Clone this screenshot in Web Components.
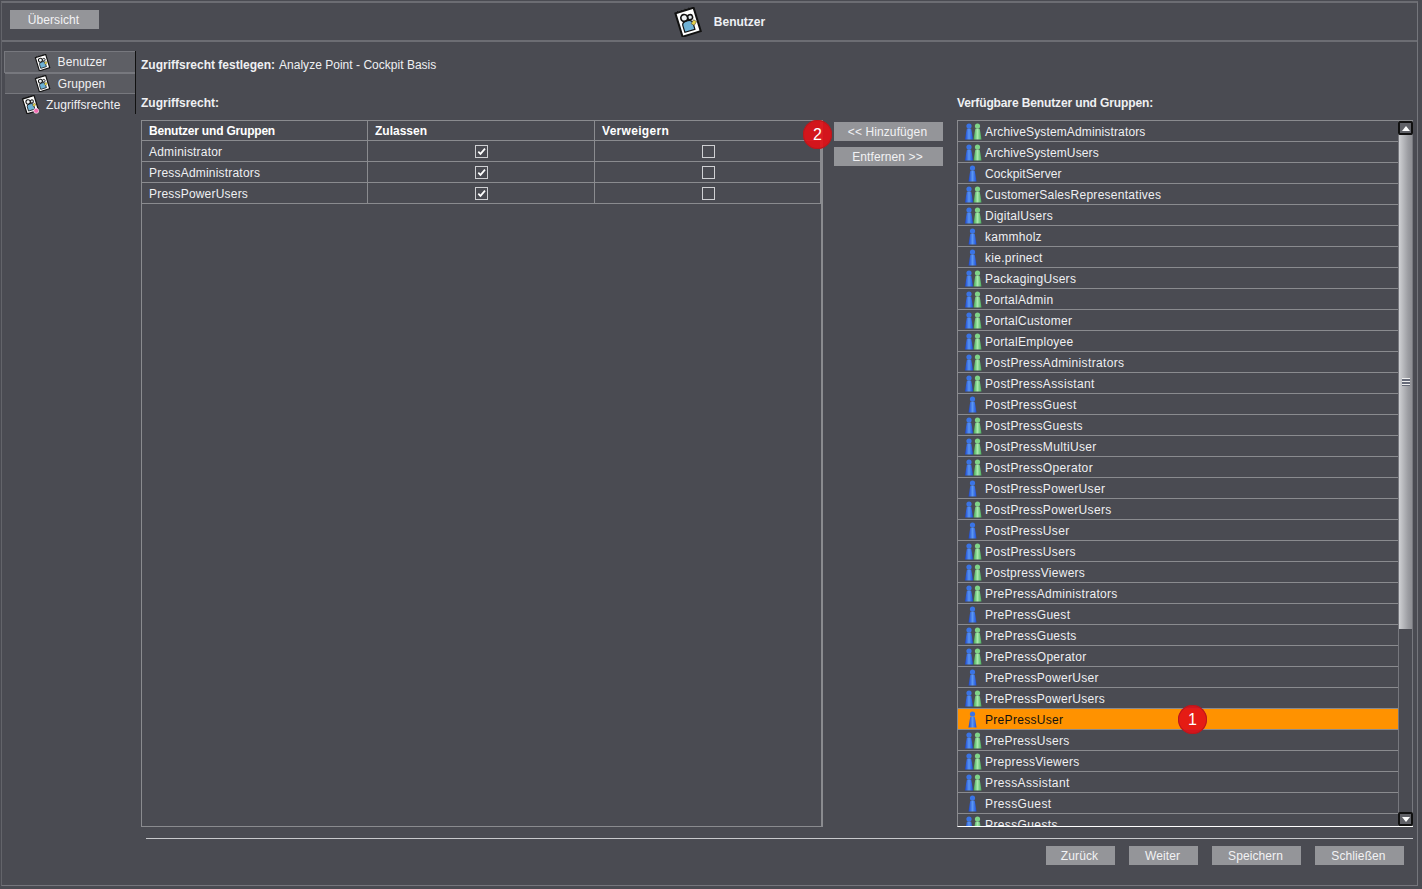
<!DOCTYPE html>
<html lang="de"><head><meta charset="utf-8"><title>Benutzer</title>
<style>
html,body{margin:0;padding:0;background:#4a4b52;}
body{font:12px "Liberation Sans",Arial,sans-serif;color:#f0f0f0;width:1422px;height:889px;overflow:hidden;}
</style></head><body>
<app-window>
  <app-header slot="header"></app-header>
  <side-nav slot="side">
    <side-tab label="Benutzer" icon="user" boxed></side-tab>
    <side-tab label="Gruppen" icon="group" shaded></side-tab>
    <side-tab label="Zugriffsrechte" icon="rights" wide></side-tab>
  </side-nav>
  <main-panel slot="main"></main-panel>
</app-window>
<script>
const mk=(name,css,html,init)=>{customElements.define(name,class extends HTMLElement{
  connectedCallback(){ if(this.shadowRoot) return; const r=this.attachShadow({mode:'open'});
    r.innerHTML='<style>'+css+'</style>'+(typeof html==='function'?html(this):html); if(init) init(this,r);} });};

const noteIcon=(size,badge,yellow)=>`<svg width="${size}" height="${size}" viewBox="0 0 30 30" style="display:block">
<g transform="rotate(-17 15 15)">
<rect x="5.5" y="3" width="19" height="24.5" fill="#fff" stroke="#111" stroke-width="2"/>
<path d="M8 1.5v2M12 1.5v2M16 1.5v2M20 1.5v2" stroke="#111" stroke-width=".9"/>
<circle cx="18.4" cy="11" r="2.5" fill="#dfe6ea" stroke="#111" stroke-width="1.5"/>
<path d="M9 24 V17 Q9 13.5 14 13.5 Q19 13.5 19.5 17 V24Z" fill="#6fb2d6" stroke="#111" stroke-width="1.2"/>
<circle cx="12.6" cy="10" r="3.4" fill="#eef2f4" stroke="#111" stroke-width="1.7"/>
<path d="M17.5 17.5l3.5-3 2.4 2.6-3.5 3z" fill="${yellow?'#f0dc3a':'#e6d24a'}" stroke="#333" stroke-width=".5"/>
</g>${badge?'<circle cx="24" cy="25" r="4" fill="#f06ab0" stroke="#fff" stroke-width="1"/>':''}</svg>`;

mk('app-window',`:host{display:grid;grid-template-columns:135px 1fr;grid-template-rows:39px 1fr;box-sizing:border-box;width:1417px;height:885px;margin:1px 0 0 1px;border:1px solid #75767c;border-top:2px solid #6c6d73;border-left:1px solid #63646a}
::slotted([slot=header]){grid-column:1/3}`,
`<slot name="header"></slot><slot name="side"></slot><slot name="main"></slot>`);

mk('app-header',`:host{display:grid;grid-template-columns:1fr auto 1fr;align-items:center;box-sizing:border-box;height:39px;border-bottom:2px solid #6c6d73;padding-left:8px}
.t{display:flex;align-items:center;gap:11px;font:bold 12px "Liberation Sans",Arial,sans-serif;color:#eef0f4;margin-left:11px}
.b{justify-self:start}`,
`<push-button class="b" w="89" style="margin-top:-5px">Übersicht</push-button>
<div class="t">${noteIcon(30)}<span>Benutzer</span></div><span></span>`);

mk('push-button',`:host{display:inline-flex;align-items:center;justify-content:center;box-sizing:border-box;height:19px;background:#949599;color:#f2f2f4;font:12px "Liberation Sans",Arial,sans-serif;letter-spacing:.1px;white-space:nowrap;padding:1px 2px 0 0}`,
`<slot></slot>`,(e)=>{e.style.width=(e.getAttribute('w')||89)+'px';});

mk('side-nav',`:host{display:flex;flex-direction:column;padding-top:9px;padding-left:0}`,`<slot></slot>`);

const icons={user:noteIcon(17),group:noteIcon(17,false,true),rights:noteIcon(19,true)};
mk('side-tab',`:host{display:block;box-sizing:border-box;height:21px;margin-left:2px;width:132px;border-right:1px solid #111;}
:host([boxed]){height:22px}
:host([wide]){height:20px}
.i{height:100%;box-sizing:border-box;display:flex;align-items:center;justify-content:center;gap:7px;color:#f0f0f2;font:12px "Liberation Sans",Arial,sans-serif;letter-spacing:.1px;padding-right:1px}
:host([boxed]) .i{background:#5e5f65;border:1px solid #77787e;border-right:0;padding-left:1px}
:host([shaded]) .i{background:#5a5b61;border-top:1px solid #77787e;border-bottom:1px solid #77787e;margin-left:1px}
:host([wide]) .i{gap:6px;justify-content:flex-start;padding-left:17px;padding-top:1px}`,
e=>`<div class="i">${icons[e.getAttribute('icon')]}<span>${e.getAttribute('label')}</span></div>`);

mk('person-icon',`:host{display:block;width:18px;height:17px;flex:none}svg{display:block}`,e=>{
 const fig=(x,a,c)=>`<g transform="translate(${x} 0)"><circle cx="4" cy="3" r="2.6" fill="${a}"/><path d="M1.8 5.8Q4 5 6.2 5.8L7 10L8 16.5H0L1 10Z" fill="url(#${c})"/></g>`;
 const defs=`<defs><linearGradient id="bl" x1="0" x2="1"><stop offset="0" stop-color="#1a45d0"/><stop offset=".5" stop-color="#5a96f2"/><stop offset="1" stop-color="#1c4cd8"/></linearGradient><linearGradient id="gr" x1="0" x2="1"><stop offset="0" stop-color="#3fa552"/><stop offset=".5" stop-color="#a8e8ac"/><stop offset="1" stop-color="#48ae5c"/></linearGradient></defs>`;
 return `<svg width="18" height="17" viewBox="0 0 18 17">${defs}${e.hasAttribute('group')?fig(8.5,'#7fd488',"gr")+fig(0,'#3a74e6',"bl"):fig(3.5,'#3a74e6',"bl")}</svg>`;});

mk('num-badge',`:host{position:absolute;display:flex;align-items:center;justify-content:center;width:29px;height:29px;border-radius:50%;background:rgba(226,16,22,.9);box-shadow:inset 0 0 0 1px #b8181c;color:#fff;font:16px "Liberation Sans",Arial,sans-serif;z-index:3}`,`<slot></slot>`);

mk('check-box',`:host{display:block;width:13px;height:13px;box-sizing:border-box;border:1px solid #cfd0d3;}svg{display:block}`,
e=>e.hasAttribute('on')?`<svg width="11" height="11" viewBox="0 0 11 11"><path d="M2.3 5.6l2.2 2.3L9 2.6" fill="none" stroke="#fff" stroke-width="1.7"/></svg>`:'');

mk('acl-table',`:host{display:block;box-sizing:border-box;width:682px;height:707px;border:1px solid #8a8b8f;border-right-width:2px;}
.r{display:grid;grid-template-columns:226px 227px 226px;box-sizing:border-box;height:21px;border-bottom:1px solid #8a8b8f;align-items:center;font:12px "Liberation Sans",Arial,sans-serif;letter-spacing:.2px;color:#eff0f2}
.r.h{height:20px;font-weight:bold;letter-spacing:0;color:#fff}
.r>div{height:100%;display:flex;align-items:center;box-sizing:border-box;padding-left:7px;border-right:1px solid #8a8b8f}
.r:not(.h)>div:first-child{padding-top:1px}
.c{justify-content:center;padding-left:0!important}
.c+.c{padding-left:2px!important}`,
()=>{const row=(n,a)=>`<div class="r"><div>${n}</div><div class="c"><check-box ${a?'on':''}></check-box></div><div class="c"><check-box></check-box></div></div>`;
return `<div class="r h"><div style="letter-spacing:-.2px">Benutzer und Gruppen</div><div>Zulassen</div><div style="letter-spacing:.3px">Verweigern</div></div>`+row('Administrator',1)+row('PressAdministrators',1)+row('PressPowerUsers',1);});

mk('user-row',`:host{display:flex;align-items:center;box-sizing:border-box;height:21px;flex:none;border-bottom:1px solid #8a8b8f;padding-left:7px;gap:2px;color:#eff0f2;font:12px "Liberation Sans",Arial,sans-serif;letter-spacing:.25px;white-space:nowrap}
span{padding-top:1px}
:host([sel]){background:#ff9200;color:#111}`,
e=>`<person-icon ${e.hasAttribute('group')?'group':''}></person-icon><span><slot></slot></span>`);

mk('scroll-bar',`:host{display:flex;flex-direction:column;width:15px;box-sizing:border-box;flex:none;background:#4a4b52;border-left:1px solid #77787e;border-right:1px solid #77787e}
.a{height:14px;flex:none;box-sizing:border-box;margin:0 -1px 0 -1px;border:2px solid #111;border-radius:2px;background:#606167;display:flex;align-items:center;justify-content:center}
.th{height:494px;flex:none;background:linear-gradient(90deg,#cfd0d3,#9c9da2 70%,#8e8f94);display:flex;align-items:center;justify-content:center}
.g{width:8px;height:8px;background:repeating-linear-gradient(#eee 0 1px,#666a78 1px 3px)}
.sp{flex:1}svg{display:block}`,
`<div class="a"><svg width="8" height="5"><path d="M4 0l4 5H0z" fill="#fff"/></svg></div><div class="th"><div class="g"></div></div><div class="sp"></div><div class="a"><svg width="8" height="5"><path d="M0 0h8L4 5z" fill="#fff"/></svg></div>`);

const users=[['ArchiveSystemAdministrators',1],['ArchiveSystemUsers',1],['CockpitServer',0],['CustomerSalesRepresentatives',1],['DigitalUsers',1],['kammholz',0],['kie.prinect',0],['PackagingUsers',1],['PortalAdmin',1],['PortalCustomer',1],['PortalEmployee',1],['PostPressAdministrators',1],['PostPressAssistant',1],['PostPressGuest',0],['PostPressGuests',1],['PostPressMultiUser',1],['PostPressOperator',1],['PostPressPowerUser',0],['PostPressPowerUsers',1],['PostPressUser',0],['PostPressUsers',1],['PostpressViewers',1],['PrePressAdministrators',1],['PrePressGuest',0],['PrePressGuests',1],['PrePressOperator',1],['PrePressPowerUser',0],['PrePressPowerUsers',1],['PrePressUser',0,1],['PrePressUsers',1],['PrepressViewers',1],['PressAssistant',1],['PressGuest',0],['PressGuests',1]];
const sp=n=>/^Archive/.test(n)?.14:/^Cockpit/.test(n)?.1:/^PostPress/.test(n)?.35:/^PrePress/.test(n)?.3:/^Press/.test(n)?.38:.27;

mk('user-list',`:host{display:flex;box-sizing:border-box;width:456px;height:707px;border-top:1px solid #8a8b8f;border-bottom:1px solid #fff;border-left:1px solid #8a8b8f;position:relative}
.l{flex:1;overflow:hidden;display:flex;flex-direction:column;position:relative}
num-badge{left:220px;top:584px}`,
`<div class="l">${users.map(u=>`<user-row ${u[1]?'group':''} ${u[2]?'sel':''} style="letter-spacing:${sp(u[0])}px">${u[0]}</user-row>`).join('')}<num-badge>1</num-badge></div><scroll-bar></scroll-bar>`);

mk('main-panel',`:host{display:flex;flex-direction:column;padding:0 0 0 4px;font:12px "Liberation Sans",Arial,sans-serif;color:#eff0f2;letter-spacing:.02px;min-width:0}
.top{height:48px;box-sizing:border-box;padding-top:16px;white-space:nowrap}
b{letter-spacing:0}.top b{margin-right:4px}
.cols{display:grid;grid-template-columns:682px 134px 456px;margin-top:0}
.lab{height:30px;font-weight:bold;letter-spacing:0;padding-top:6px;box-sizing:border-box}
.lab.v{letter-spacing:-.125px}
.mid{display:flex;flex-direction:column;gap:6px;padding:32px 0 0 11px;position:relative}
num-badge{left:-20px;top:30px}
.rule{height:1px;background:#c8c9cc;margin:11px 5px 0 5px;width:1267px}
.foot{display:flex;justify-content:flex-end;gap:14px;padding:7px 10px 0 0;width:1273px;box-sizing:border-box}`,
`<div class="top"><b>Zugriffsrecht festlegen:</b>Analyze Point - Cockpit Basis</div>
<div class="cols">
 <div><div class="lab">Zugriffsrecht:</div><acl-table></acl-table></div>
 <div class="mid"><num-badge>2</num-badge><push-button w="109">&lt;&lt; Hinzufügen</push-button><push-button w="109">Entfernen &gt;&gt;</push-button></div>
 <div><div class="lab v">Verfügbare Benutzer und Gruppen:</div><user-list></user-list></div>
</div>
<div class="rule"></div>
<div class="foot"><push-button w="69">Zurück</push-button><push-button w="69">Weiter</push-button><push-button w="89">Speichern</push-button><push-button w="89">Schließen</push-button></div>`);
</script>
</body></html>
